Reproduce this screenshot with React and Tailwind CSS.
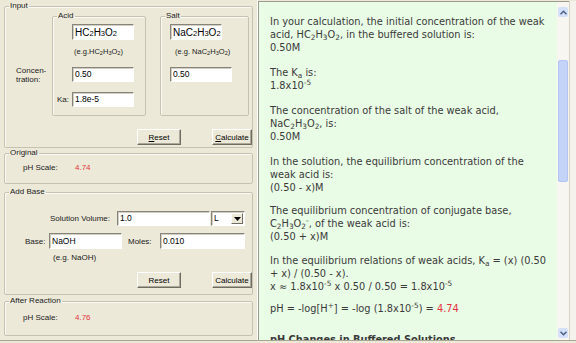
const sunken =
  "bg-white border border-t-[#85837a] border-l-[#85837a] border-b-white border-r-white shadow-[inset_1px_1px_0_#d2cfc2] flex items-center pl-[2px] text-black overflow-hidden whitespace-nowrap";

const raised =
  "h-[16px] bg-[#ece9d8] border border-t-white border-l-white border-b-[#6f6d62] border-r-[#6f6d62] shadow-[inset_-1px_-1px_0_#aca899] flex items-center justify-center text-[8px] text-black";

const group = "border border-[#c6c2b2] rounded-[2px] shadow-[inset_1px_1px_0_#fbfaf6]";
const legend = "ml-[4px] px-[1px] text-[8px] leading-[10px] text-[#1a1a1a]";

function Btn({ className = "", u, children }) {
  return (
    <div className={`${raised} ${className}`}>
      {u ? <span className="underline">{u}</span> : null}
      {children}
    </div>
  );
}

function LeftPanel() {
  return (
    <div className="w-[258px] h-[340px] border-r border-white pl-[4px] pt-[1px] flex flex-col text-[8px] leading-[9px]">
      {/* Input */}
      <fieldset className={`${group} w-[249px] h-[147px]`}>
        <legend className={legend}>Input</legend>
        <div className="flex">
          <div className="w-[47px] pt-[55px] pl-[11px]">
            Concen-
            <br />
            tration:
          </div>
          <fieldset className={`${group} w-[94px] h-[105px]`}>
            <legend className={legend}>Acid</legend>
            <div className="pl-[19px] pt-[3px]">
              <div className={`${sunken} w-[62px] h-[16px] text-[10px]`}>
                HC<sub>2</sub>H<sub>3</sub>O<sub>2</sub>
              </div>
              <div className="mt-[7px] pl-[2px] text-[7.5px] whitespace-nowrap">
                (e.g.HC<sub>2</sub>H<sub>3</sub>O<sub>2</sub>)
              </div>
              <div className={`${sunken} mt-[11px] w-[62px] h-[15px] text-[8.5px]`}>0.50</div>
              <div className="flex items-center mt-[10px] -ml-[15px]">
                <span className="w-[15px]">Ka:</span>
                <div className={`${sunken} w-[62px] h-[15px] text-[8.5px]`}>1.8e-5</div>
              </div>
            </div>
          </fieldset>
          <fieldset className={`${group} ml-[14px] w-[89px] h-[105px]`}>
            <legend className={legend}>Salt</legend>
            <div className="pl-[9px] pt-[3px]">
              <div className={`${sunken} w-[52px] h-[16px] text-[10px]`}>
                NaC<sub>2</sub>H<sub>3</sub>O<sub>2</sub>
              </div>
              <div className="mt-[7px] pl-[5px] text-[7.5px] whitespace-nowrap">
                (e.g. NaC<sub>2</sub>H<sub>3</sub>O<sub>2</sub>)
              </div>
              <div className={`${sunken} mt-[11px] w-[62px] h-[15px] text-[8.5px]`}>0.50</div>
            </div>
          </fieldset>
        </div>
        <div className="flex justify-end mt-[13px]">
          <Btn className="w-[44px] mr-[31px]" u="R">eset</Btn>
          <Btn className="w-[40px]" u="C">alculate</Btn>
        </div>
      </fieldset>

      {/* Original */}
      <fieldset className={`${group} w-[249px] h-[36px]`}>
        <legend className={legend}>Original</legend>
        <div className="flex mt-[5px] pl-[18px]">
          <span className="w-[52px]">pH Scale:</span>
          <span className="text-[#e2343c]">4.74</span>
        </div>
      </fieldset>

      {/* Add Base */}
      <fieldset className={`${group} mt-[3px] w-[249px] h-[108px]`}>
        <legend className={legend}>Add Base</legend>
        <div className="flex items-center mt-[14px] pl-[45px]">
          <span className="w-[67px]">Solution Volume:</span>
          <div className={`${sunken} w-[93px] h-[15px] text-[8.5px]`}>1.0</div>
          <div className={`${sunken} ml-[1px] w-[34px] h-[15px] text-[8.5px] justify-between pr-[1px]`}>
            <span>L</span>
            <div className="w-[12px] h-[11px] bg-[#ece9d8] border border-t-white border-l-white border-b-[#6f6d62] border-r-[#6f6d62] flex items-center justify-center">
              <svg width="7" height="4" viewBox="0 0 7 4">
                <path d="M0 0h7L3.5 4z" fill="#000" />
              </svg>
            </div>
          </div>
        </div>
        <div className="flex items-center mt-[7px] pl-[20px]">
          <span className="w-[24px]">Base:</span>
          <div className={`${sunken} w-[73px] h-[16px] text-[8.5px]`}>NaOH</div>
          <span className="ml-[6px] w-[32px]">Moles:</span>
          <div className={`${sunken} w-[85px] h-[16px] text-[8.5px]`}>0.010</div>
        </div>
        <div className="mt-[4px] pl-[48px]">(e.g. NaOH)</div>
        <div className="flex justify-end mt-[10px]">
          <Btn className="w-[44px] mr-[31px]">Reset</Btn>
          <Btn className="w-[40px]">Calculate</Btn>
        </div>
      </fieldset>

      {/* After Reaction */}
      <fieldset className={`${group} mt-[1px] w-[249px] h-[40px]`}>
        <legend className={legend}>After Reaction</legend>
        <div className="flex mt-[7px] pl-[18px]">
          <span className="w-[52px]">pH Scale:</span>
          <span className="text-[#e2343c]">4.76</span>
        </div>
      </fieldset>
    </div>
  );
}

function Chevron({ up }) {
  return (
    <svg width="7" height="5" viewBox="0 0 7 5">
      <path
        d={up ? "M0.5 4.2L3.5 1.2L6.5 4.2" : "M0.5 0.8L3.5 3.8L6.5 0.8"}
        fill="none"
        stroke="#4d6185"
        strokeWidth="1.5"
      />
    </svg>
  );
}

function Scrollbar() {
  return (
    <div className="w-[12px] h-full bg-[#f7f6f1] flex flex-col items-center pt-[5px]">
      <div className="w-[10px] h-[10px] rounded-[2px] bg-[#d5e0fa] flex items-center justify-center">
        <Chevron up />
      </div>
      <div className="mt-[43px] w-[10px] h-[122px] rounded-[2px] bg-[#c4d4f8] border border-[#b2c5f2]" />
      <div className="flex-1" />
      <div className="mb-[2px] w-[10px] h-[10px] rounded-[2px] bg-[#d5e0fa] flex items-center justify-center">
        <Chevron />
      </div>
    </div>
  );
}

function P({ children, className = "" }) {
  return <div className={`whitespace-nowrap ${className}`}>{children}</div>;
}

function RightPanel() {
  return (
    <div className="w-[318px] h-[340px] flex pt-[1px]">
      <div className="w-[311px] flex border-t border-l border-[#9d9b90] bg-[#e9fce5]">
        <div className="flex-1 overflow-hidden pl-[11px] pt-[13px] font-['DejaVu_Sans',Verdana,sans-serif] text-[9.8px] leading-[13px] text-[#3a3a3a]">
          <P className="mb-[12px]">
            In your calculation, the initial concentration of the weak
            <br />
            acid, HC<sub>2</sub>H<sub>3</sub>O<sub>2</sub>, in the buffered solution is:
            <br />
            0.50M
          </P>
          <P className="mb-[12px]">
            The K<sub>a</sub> is:
            <br />
            1.8x10<sup>-5</sup>
          </P>
          <P className="mb-[12px]">
            The concentration of the salt of the weak acid,
            <br />
            NaC<sub>2</sub>H<sub>3</sub>O<sub>2</sub>, is:
            <br />
            0.50M
          </P>
          <P className="mb-[10px]">
            In the solution, the equilibrium concentration of the
            <br />
            weak acid is:
            <br />
            (0.50 - x)M
          </P>
          <P className="mb-[11px]">
            The equilibrium concentration of conjugate base,
            <br />
            C<sub>2</sub>H<sub>3</sub>O<sub>2</sub>
            <sup>-</sup>, of the weak acid is:
            <br />
            (0.50 + x)M
          </P>
          <P className="mb-[9px]">
            In the equilibrium relations of weak acids, K<sub>a</sub> = (x) (0.50
            <br />
            + x) / (0.50 - x).
            <br />
            x ≈ 1.8x10<sup>-5</sup> x 0.50 / 0.50 = 1.8x10<sup>-5</sup>
          </P>
          <P className="mb-[18px]">
            pH = -log[H<sup>+</sup>] = -log (1.8x10<sup>-5</sup>) ={" "}
            <span className="text-[#e2343c]">4.74</span>
          </P>
          <div className="font-bold whitespace-nowrap">pH Changes in Buffered Solutions</div>
        </div>
        <Scrollbar />
      </div>
      <div className="w-[7px] bg-[#f3f2ec] border-l border-[#d6d3c6]" />
    </div>
  );
}

export default function App() {
  return (
    <div className="w-[576px] h-[343px] bg-[#ece9d8] flex flex-col overflow-hidden font-['Liberation_Sans',Arial,sans-serif] text-[#1a1a1a]">
      <div className="flex h-[340px]">
        <LeftPanel />
        <RightPanel />
      </div>
      <div className="h-[3px] border-t border-[#a8a594] bg-[#ece9d8]" />
    </div>
  );
}
